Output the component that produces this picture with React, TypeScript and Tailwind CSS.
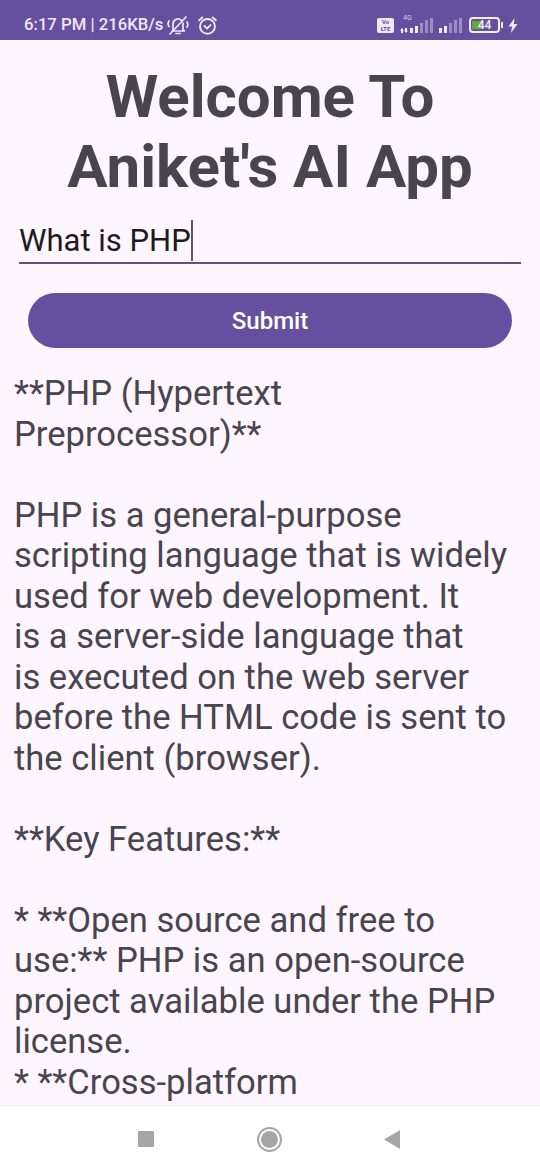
const body = [
  "**PHP (Hypertext",
  "Preprocessor)**",
  "",
  "PHP is a general-purpose",
  "scripting language that is widely",
  "used for web development. It",
  "is a server-side language that",
  "is executed on the web server",
  "before the HTML code is sent to",
  "the client (browser).",
  "",
  "**Key Features:**",
  "",
  "* **Open source and free to",
  "use:** PHP is an open-source",
  "project available under the PHP",
  "license.",
  "* **Cross-platform",
];

function MutedBell() {
  return (
    <svg width="24" height="24" viewBox="0 0 24 24" fill="none" stroke="#eee8f6" strokeWidth="1.7" strokeLinecap="round" strokeLinejoin="round">
      <path d="M7 16.500V11a5 5 0 0 1 8.500-3.600" />
      <path d="M17 10v6.500l1.500 1.500H6" />
      <path d="M10 20.500h4" />
      <path d="M4 21 20 4" />
      <path d="M3 8c-1 1.500-1 4 0 5.500M21 9c1 1.500 1 3.500 0 5" />
    </svg>
  );
}

function Alarm() {
  return (
    <svg width="21" height="21" viewBox="0 0 24 24" fill="none" stroke="#eee8f6" strokeWidth="2.2" strokeLinecap="round" strokeLinejoin="round">
      <circle cx="12" cy="13" r="8.500" />
      <path d="m8.500 12.500 3 3 4-4" />
      <path d="M2.500 6 6 2.800M21.500 6 18 2.800" />
    </svg>
  );
}

function Signal() {
  const heights = [5, 7, 10, 13, 15];
  return (
    <div className="flex items-end gap-[2px]">
      {heights.map((h, i) => (
        <div key={h} className={i < 2 ? "w-[3px] bg-[#efeaf6]" : "w-[3px] bg-[#9d8bc2]"} style={{ height: h }} />
      ))}
    </div>
  );
}

function StatusBar() {
  return (
    <div className="flex h-[40px] items-center bg-[#674fa0] pl-[24px] pr-[22px] pt-[10px] text-[#eee8f6]">
      <span className="text-[16.700px] font-medium leading-none">6:17 PM | 216KB/s</span>
      <div className="ml-[3px] flex items-center gap-[7px]">
        <MutedBell />
        <Alarm />
      </div>
      <div className="ml-auto flex items-center">
        <div className="flex h-[15px] w-[17px] flex-col items-center justify-center rounded-[2px] bg-[#eee8f6] text-[6px] font-bold leading-[7px] text-[#674fa0]">
          <span>Vo</span>
          <span>LTE</span>
        </div>
        <div className="relative ml-[6px] flex items-end gap-[2px]">
          <span className="absolute left-[3px] top-[-3px] text-[7px] leading-none text-[#d6cde8]">4G</span>
          <svg width="8" height="5" viewBox="0 0 8 5" fill="#efeaf6">
            <path d="M2 0 4 2.500H3V5H1V2.500H0zM6 5 4 2.500h1V0h2v2.500h1z" />
          </svg>
          <Signal />
        </div>
        <div className="ml-[6px]">
          <Signal />
        </div>
        <div className="ml-[7px] flex h-[16px] w-[31px] items-center rounded-[4px] border-2 border-[#f2eef8] p-[1px]">
          <div className="relative flex h-full w-full items-center">
            <div className="h-[8px] w-[10px] bg-[#5cab34]" />
            <span className="absolute inset-0 text-center text-[12px] font-medium leading-[10px] text-[#f2eef8]">44</span>
          </div>
        </div>
        <div className="ml-[1px] h-[6px] w-[2px] bg-[#eee8f6]" />
        <svg className="ml-[5px]" width="10" height="15" viewBox="0 0 10 15" fill="#eee8f6">
          <path d="M6.500 0 0.500 8.500h3.500L3 15l6.500-9H5.800z" />
        </svg>
      </div>
    </div>
  );
}

function NavBar() {
  return (
    <div className="flex h-[65px] items-center border-t border-[#f0ebf2] bg-white">
      <div className="flex w-full items-center justify-between pl-[138px] pr-[140px] pt-[2px]">
        <div className="h-[16px] w-[16px] rounded-[1px] bg-[#a6a6a6]" />
        <div className="flex h-[25px] w-[25px] items-center justify-center rounded-full border-2 border-[#a6a6a6]">
          <div className="h-[17px] w-[17px] rounded-full bg-[#a6a6a6]" />
        </div>
        <svg width="16" height="19" viewBox="0 0 16 19" fill="#a6a6a6">
          <path d="M16 0v19L0 9.500z" />
        </svg>
      </div>
    </div>
  );
}

export default function App() {
  return (
    <div className="flex h-[1170px] w-[540px] flex-col overflow-hidden bg-[#fdf6ff] font-['Roboto',sans-serif]">
      <StatusBar />
      <div className="flex h-[1065px] flex-col overflow-hidden">
        <h1 className="mt-[22px] text-center text-[60px] font-bold leading-[70px] text-[#48454e]">
          Welcome To
          <br />
          Aniket's AI App
        </h1>
        <div className="mx-[19px] mt-[18px] flex h-[44px] items-center border-b-2 border-[#5f5375] pb-[2px]">
          <span className="text-[31px] leading-none text-[#1d1b20]">What is PHP</span>
          <div className="h-[41px] w-[2px] bg-[#5f5375]" />
        </div>
        <div className="mx-[28px] mt-[29px] flex h-[55px] items-center justify-center rounded-full bg-[#674fa0] pt-[1px] text-[24px] font-medium text-white">
          Submit
        </div>
        <div className="mt-[25px] pl-[14px] text-[34.600px] leading-[40.500px] text-[#48454e]">
          {body.map((line, i) => (
            <div key={i} className="h-[40.500px] whitespace-nowrap">
              {line}
            </div>
          ))}
        </div>
      </div>
      <NavBar />
    </div>
  );
}
